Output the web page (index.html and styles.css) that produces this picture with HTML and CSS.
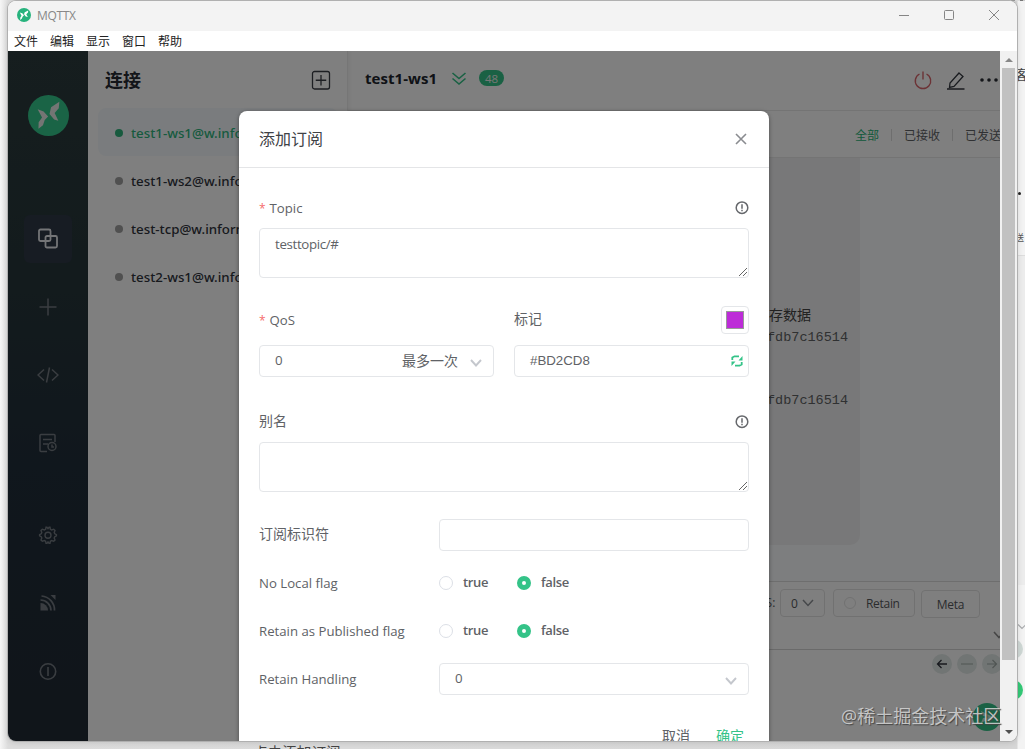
FILE: index.html
```html
<!DOCTYPE html>
<html lang="zh-CN">
<head>
<meta charset="utf-8">
<title>MQTTX</title>
<link rel="stylesheet" href="styles.css">
</head>
<body>
<div class="desktop">
  <div class="behind-top"></div>
  <div class="behind-caption">点击添加订阅</div>
  <div class="behind-char">客</div>
  <div class="behind-dot"></div>
  <div class="behind-small">送</div>
  <div class="behind-panel"></div>
  <svg class="behind-chevron" width="10" height="8" viewBox="0 0 10 8"><path d="M1 1.500l4 4 4-4" fill="none" stroke="#a9abad" stroke-width="1.200"/></svg>
  <div class="behind-nav"></div>
  <div class="behind-fab"></div>

  <div class="window">
    <header class="titlebar">
      <svg class="app-icon" viewBox="0 0 40 40"><circle cx="20" cy="20" r="20" fill="#27b37d"/><path d="M8 13l7 2 5 6-4 4-2 5-5 4 .5-7 3.500-5zM32 7l-.5 6-5 5 4.500 8-6-2-5-6 2-6z" fill="#fff"/></svg>
      <span class="app-name">MQTTX</span>
      <svg class="window-controls" width="106" height="16" viewBox="0 0 106 16" fill="none" stroke="#858585" stroke-width="1"><path d="M1 8.500h10M91 3l10 10M101 3L91 13"/><rect x="46.500" y="3.500" width="9" height="9" rx="1"/></svg>
    </header>
    <nav class="menubar"><span>文件</span><span>编辑</span><span>显示</span><span>窗口</span><span>帮助</span></nav>

    <div class="viewport">
      <div class="app">
        <aside class="sidebar">
          <svg class="logo" viewBox="0 0 40 40"><circle cx="20" cy="20" r="20" fill="#35c88c"/><path d="M9.400 14l5.800 2 4.400 5-3.300 3.500-1.700 5-4.400 3.500.2-6.500 3.300-4.500zM30.600 6.500L30 13l-4 4.600 3.600 7.400-4.100-1-4.500-5.500 1.500-6.500z" fill="#e8ebe9"/></svg>
          <div class="nav-group">
            <div class="nav-item active"><svg width="22" height="22" viewBox="0 0 22 22" fill="none" stroke="#e8eaee" stroke-width="1.800"><rect x="2" y="1.500" width="11.500" height="11.500" rx="1.500"/><rect x="8.500" y="8" width="11.500" height="11.500" rx="1.500"/></svg></div>
            <div class="nav-item"><svg width="22" height="22" viewBox="0 0 22 22" fill="none" stroke="#747b82" stroke-width="1.500"><path d="M11 2.500v17M2.500 11h17"/></svg></div>
            <div class="nav-item"><svg width="22" height="22" viewBox="0 0 22 22" fill="none" stroke="#747b82" stroke-width="1.500"><path d="M7 5.500L1 11l6 5.500M15 5.500l6 5.500-6 5.500M12.500 3.500l-3 15"/></svg></div>
            <div class="nav-item"><svg width="22" height="22" viewBox="0 0 22 22" fill="none" stroke="#747b82" stroke-width="1.500"><path d="M18 10V3.500a1 1 0 0 0-1-1H4a1 1 0 0 0-1 1v15a1 1 0 0 0 1 1h6M6 7.500h9M6 12h5"/><circle cx="15" cy="14.500" r="4"/><path d="M15 12.500v2.500h2"/></svg></div>
          </div>
          <div class="nav-group bottom">
            <div class="nav-item"><svg width="20" height="20" viewBox="0 0 20 20" fill="none" stroke="#747b82" stroke-width="1.400"><path d="M7.600 4.300L8 2.200h.9L10 3.600l1.100-1.400h.9l.4 2.100 1.300.7 2-.8 1.300 1.300-.8 2 .6 1.300 1.600.9v1.100l-1.600.9-.6 1.300.8 2-1.300 1.300-2-.8-1.300.7-.4 2H11l-1-1.300-1 1.300H8l-.4-2-1.300-.7-2 .8L3 15l.8-2-.6-1.300-1.600-.9V9.700l1.600-.9.600-1.300-.8-2 1.300-1.300 2 .8z"/><circle cx="10" cy="10.300" r="3"/></svg></div>
            <div class="nav-item"><svg width="20" height="20" viewBox="0 0 20 20" fill="none" stroke="#747b82" stroke-width="1.700"><path d="M2.500 17.500V10a7.500 7.500 0 0 1 7.500 7.500z" fill="#747b82" stroke="none"/><path d="M2.500 7a10.500 10.500 0 0 1 10.500 10.500M3.500 3a14 14 0 0 1 13 14.500"/><path d="M12.500 2h5v5z" fill="#747b82" stroke="none"/></svg></div>
            <div class="nav-item"><svg width="20" height="20" viewBox="0 0 20 20" fill="none" stroke="#747b82" stroke-width="1.600"><circle cx="10" cy="10.500" r="7.700"/><path d="M10 6v9"/></svg></div>
          </div>
        </aside>

        <section class="connections">
          <div class="connections-head"><h1>连接</h1>
            <svg width="20" height="20" viewBox="0 0 20 20" fill="none" stroke="#3a3e46" stroke-width="1.300"><rect x="1.500" y="1.500" width="17" height="17.500" rx="2"/><path d="M10 5v10.500M4.750 10.250h10.500"/></svg>
          </div>
          <div class="connection online"><i></i><span>test1-ws1@w.info</span></div>
          <div class="connection"><i></i><span>test1-ws2@w.info</span></div>
          <div class="connection"><i></i><span>test-tcp@w.inform</span></div>
          <div class="connection"><i></i><span>test2-ws1@w.info</span></div>
        </section>

        <main class="main">
          <div class="topbar">
            <span class="conn-title">test1-ws1</span>
            <svg class="expand" width="16" height="16" viewBox="0 0 16 16" fill="none" stroke="#34c388" stroke-width="1.600"><path d="M1.500 2L8 7.500 14.500 2M1.500 7.500L8 13l6.500-5.500"/></svg>
            <span class="badge">48</span>
            <div class="tools">
              <svg width="20" height="20" viewBox="0 0 20 20" fill="none" stroke="#d8666c" stroke-width="1.400"><path d="M6.500 3a7.700 7.700 0 1 0 7 0M10 .5v8"/></svg>
              <svg width="20" height="20" viewBox="0 0 20 20" fill="none" stroke="#343940" stroke-width="1.300"><path d="M13 2l4 3.500-9 10-4.500 1 .5-4.500zM1 18h17.500"/></svg>
              <svg width="20" height="20" viewBox="0 0 20 20" fill="#282c34"><circle cx="3" cy="9" r="1.800"/><circle cx="10" cy="9" r="1.800"/><circle cx="17" cy="9" r="1.800"/></svg>
            </div>
          </div>
          <div class="filters"><span class="selected">全部</span><b></b><span>已接收</span><b></b><span>已发送</span></div>
          <div class="messages">
            <div class="bubble">
              <p class="hint">存数据</p>
              <p class="mono">fdb7c16514</p>
              <p class="mono second">fdb7c16514</p>
            </div>
          </div>
          <div class="composer">
            <span class="qos-label">QoS:</span>
            <div class="box qos"><span>0</span><svg width="12" height="8" viewBox="0 0 12 8" fill="none" stroke="#8d9196" stroke-width="1.500"><path d="M1 1l5 5.500L11 1"/></svg></div>
            <div class="box retain"><i></i><span>Retain</span></div>
            <div class="box meta">Meta</div>
            <svg class="collapse" width="12" height="8" viewBox="0 0 12 8" fill="none" stroke="#8c8c8c" stroke-width="1.600"><path d="M1 1l5 5.500L11 1"/></svg>
          </div>
          <div class="payload">
            <div class="history">
              <span><svg width="12" height="12" viewBox="0 0 12 12" fill="none" stroke="#30343c" stroke-width="1.300"><path d="M11 6H2M5.500 2L1.500 6l4 4"/></svg></span>
              <span><svg width="12" height="12" viewBox="0 0 12 12" fill="none" stroke="#aab4b1" stroke-width="1.200"><path d="M0 6h12"/></svg></span>
              <span><svg width="12" height="12" viewBox="0 0 12 12" fill="none" stroke="#a0aaa7" stroke-width="1.200"><path d="M1 6h9M6.500 2l4 4-4 4"/></svg></span>
            </div>
            <div class="send"><svg width="14" height="14" viewBox="0 0 14 14"><path d="M1 1l12 6-12 6 2-5 6-1-6-1z" fill="#bfe8d6"/></svg></div>
          </div>
        </main>

        <div class="overlay"></div>
        <div class="dialog">
          <div class="dialog-head"><h2>添加订阅</h2><svg width="12" height="12" viewBox="0 0 12 12" fill="none" stroke="#8a8c90" stroke-width="1.600"><path d="M1 1l10 10M11 1L1 11"/></svg></div>
          <div class="dialog-body">
            <div class="label-row"><label><em>*</em>Topic</label><svg width="14" height="14" viewBox="0 0 14 14" fill="none" stroke="#66686c" stroke-width="1.500"><circle cx="7" cy="6.700" r="5.800"/><path d="M7 3.200v4.600M7 8.800v1.500"/></svg></div>
            <div class="field area"><span>testtopic/#</span><svg class="grip" width="10" height="10" viewBox="0 0 10 10" stroke="#666" fill="none"><path d="M1 9l8-8M5 9l4-4"/></svg></div>
            <div class="pair">
              <div>
                <div class="label-row"><label><em>*</em>QoS</label></div>
                <div class="field select"><span class="num">0</span><span class="desc">最多一次</span><svg width="12" height="8" viewBox="0 0 12 8" fill="none" stroke="#c4c7cd" stroke-width="1.900"><path d="M1 1l5 5.500L11 1"/></svg></div>
              </div>
              <div>
                <div class="label-row"><label class="cjk">标记</label><div class="swatch"><i></i></div></div>
                <div class="field color"><span class="hex">#BD2CD8</span><svg width="12" height="12" viewBox="0 0 12 12" fill="none" stroke="#34c388" stroke-width="1.800"><path d="M1.300 5V2.500L3.500 1.300H8M10.700 7v2.500L8.500 10.700H4"/><path d="M11.500 1v4.500h-4zM.5 11V6.500h4z" fill="#34c388" stroke="none"/></svg></div>
              </div>
            </div>
            <div class="label-row alias"><label class="cjk">别名</label><svg width="14" height="14" viewBox="0 0 14 14" fill="none" stroke="#66686c" stroke-width="1.500"><circle cx="7" cy="6.700" r="5.800"/><path d="M7 3.200v4.600M7 8.800v1.500"/></svg></div>
            <div class="field area"><svg class="grip" width="10" height="10" viewBox="0 0 10 10" stroke="#666" fill="none"><path d="M1 9l8-8M5 9l4-4"/></svg></div>
            <div class="line first"><label class="cjk">订阅标识符</label><div class="field"></div></div>
            <div class="line"><label>No Local flag</label><div class="radios"><i></i><span class="true">true</span><i class="on"></i><span>false</span></div></div>
            <div class="line"><label>Retain as Published flag</label><div class="radios"><i></i><span class="true">true</span><i class="on"></i><span>false</span></div></div>
            <div class="line"><label>Retain Handling</label><div class="field select"><span class="num">0</span><svg width="12" height="8" viewBox="0 0 12 8" fill="none" stroke="#c4c7cd" stroke-width="1.900"><path d="M1 1l5 5.500L11 1"/></svg></div></div>
            <div class="actions"><span>取消</span><span class="ok">确定</span></div>
          </div>
        </div>
      </div>
      <div class="scrollbar"><i class="up"></i><div class="thumb"></div><i class="down"></i></div>
    </div>
  </div>
  <div class="watermark">@稀土掘金技术社区</div>
</div>
</body>
</html>
```
FILE: styles.css
```css
* { box-sizing: border-box; }
body { margin: 0; font-family: "Open Sans", "Noto Sans CJK SC", sans-serif; font-size: 13px; color: #606266; }
h1, h2, p { margin: 0; }
i, em { font-style: normal; }
svg { display: block; flex: none; }
.desktop { position: relative; width: 1025px; height: 749px; overflow: hidden; background: linear-gradient(90deg, #f6f6f6 0, #dcdcdc 8px, #d6d6d6 1017px, #f3f3f3 1018px); }
.behind-top { position: absolute; left: 250px; right: 0; top: 0; height: 1px; background: repeating-linear-gradient(90deg, #777 0 3px, #ccc 3px 5px, #999 5px 9px, #ddd 9px 14px); }
.behind-caption { position: absolute; left: 253px; top: 742px; font-size: 14.600px; line-height: 20px; color: #444; white-space: nowrap; }
.behind-char { position: absolute; left: 1015px; top: 64px; font-size: 13px; line-height: 20px; color: #444; }
.behind-dot { position: absolute; left: 1018px; top: 192px; width: 3px; height: 3px; border-radius: 50%; background: #222; }
.behind-small { position: absolute; left: 1015px; top: 230px; font-size: 9px; line-height: 16px; color: #555; }
.behind-panel { position: absolute; left: 1017px; top: 255px; width: 8px; height: 330px; background: #ececec; border-top: 1px solid #ddd; }
.behind-chevron { position: absolute; left: 1017px; top: 623px; }
.behind-nav { position: absolute; left: 1003px; top: 639px; width: 20px; height: 20px; border-radius: 50%; background: #cfd8d5; }
.behind-fab { position: absolute; left: 1003px; top: 680px; width: 20px; height: 20px; border-radius: 50%; background: #34c977; }

.window { position: absolute; left: 8px; top: 1px; width: 1009px; height: 740px; display: flex; flex-direction: column; border-radius: 8px; overflow: hidden; box-shadow: 0 0 0 1px #b0b0b0, 0 1px 6px rgba(0,0,0,.15); background: #fff; }
.titlebar { height: 30px; flex: none; display: flex; align-items: center; padding: 0 9px 2px 9px; background: #f3f3f3; }
.app-icon { width: 14px; height: 14px; }
.app-name { margin-left: 6px; font-size: 12px; letter-spacing: -.35px; color: #888; }
.window-controls { margin-left: auto; margin-right: 4px; }
.menubar { height: 20px; flex: none; display: flex; gap: 12px; padding: 1px 0 0 6px; background: #fff; font-size: 12px; line-height: 20px; color: #222; }
.viewport { flex: 1; display: flex; min-height: 0; }
.app { position: relative; width: 992px; display: flex; overflow: hidden; background: #fff; }

.sidebar { width: 80px; flex: none; display: flex; flex-direction: column; align-items: center; padding-top: 44px; background: linear-gradient(180deg, #2c3c3e 0, #26363a 35%, #212e3a 60%, #202a34 100%); }
.logo { width: 41px; height: 41px; }
.nav-group { display: flex; flex-direction: column; gap: 20px; margin-top: 79px; }
.nav-group.bottom { margin-top: 44px; }
.nav-item { width: 48px; height: 48px; display: flex; align-items: center; justify-content: center; border-radius: 6px; }
.nav-item.active { background: #2e3846; }

.connections { width: 260px; flex: none; border-right: 1px solid #ececec; box-shadow: 2px 0 4px rgba(0,0,0,.05); }
.connections-head { height: 57px; display: flex; align-items: center; justify-content: space-between; padding: 1px 16px 0 17px; }
.connections-head h1 { font-size: 18px; line-height: 28px; font-weight: 700; color: #262b33; }
.connection { height: 48px; width: 240px; margin-left: 10px; border-radius: 8px; display: flex; align-items: center; padding: 1px 0 0 17px; font-family: "Noto Sans", sans-serif; font-size: 13.300px; font-weight: 500; color: #30343c; white-space: nowrap; }
.connection i { width: 8px; height: 8px; border-radius: 50%; background: #a0a0a0; margin-right: 8px; flex: none; }
.connection.online { color: #2eb57d; background: #f5f9fc; }
.connection.online i { background: #2eb57d; }

.main { width: 652px; display: flex; flex-direction: column; }
.topbar { height: 60px; flex: none; display: flex; align-items: center; padding: 0 1px 4px 17px; border-bottom: 1px solid #e8e8e8; }
.conn-title { width: 72px; margin-top: -2px; font-size: 15px; font-weight: 700; letter-spacing: .05px; color: #20242c; white-space: nowrap; }
.expand { margin-left: 14px; }
.badge { margin-left: 12px; margin-top: -1px; width: 25px; height: 16px; border-radius: 8px; background: #34c388; color: #eee; font-size: 11.500px; line-height: 17px; text-align: center; }
.tools { margin-left: auto; margin-top: 4px; display: flex; gap: 13px; }
.filters { height: 47px; flex: none; display: flex; align-items: center; padding-left: 507px; padding-top: 1px; border-bottom: 1px solid #e8e8e8; font-size: 12px; white-space: nowrap; overflow: hidden; color: #606266; }
.filters span { flex: none; }
.filters .selected { color: #1fb477; }
.filters b { width: 1px; height: 12px; flex: none; margin: 0 12px; background: #ddd; }
.messages { height: 423px; flex: none; background: #fafcfe; }
.bubble { width: 512px; height: 387px; padding: 145px 0 0 421px; border-radius: 0 0 10px 0; background: #f1f1f2; color: #3c3c3e; white-space: nowrap; }
.hint { font-size: 14px; line-height: 24px; color: #444; }
.mono { font: 13.500px/20px "Liberation Mono", monospace; margin-left: -2px; padding-top: 1px; color: #606264; }
.mono.second { margin-top: 42px; }
.composer { position: relative; height: 69px; flex: none; display: flex; align-items: flex-start; padding: 7px 0 0 401px; border-top: 1px solid #ddd; border-bottom: 1px solid #d4d4d4; font-size: 12px; color: #56585c; }
.qos-label { width: 31px; line-height: 28px; text-align: right; padding-right: 5px; }
.box { height: 28px; border: 1px solid #e2e2e2; border-radius: 4px; display: flex; align-items: center; }
.qos { width: 45px; justify-content: space-between; padding: 0 10px; }
.retain { width: 82px; margin-left: 8px; padding-left: 10px; letter-spacing: -.3px; }
.retain i { width: 12px; height: 12px; border: 1px solid #e2e2e2; border-radius: 50%; margin-right: 10px; }
.meta { width: 59px; margin-left: 6px; margin-top: 1px; justify-content: center; letter-spacing: -.3px; }
.collapse { position: absolute; left: 645px; top: 49px; }
.payload { position: relative; flex: 1; }
.history { display: flex; gap: 5px; padding: 4px 0 0 584px; }
.history span { width: 20px; height: 20px; flex: none; border-radius: 50%; background: #e3eae8; display: flex; align-items: center; justify-content: center; }
.send { position: absolute; left: 625px; top: 53px; width: 28px; height: 28px; border-radius: 50%; background: #34c388; display: flex; align-items: center; justify-content: center; }

.overlay { position: absolute; inset: 0; background: rgba(0,0,0,.5); }
.dialog { position: absolute; left: 231px; top: 60px; width: 530px; height: 660px; border-radius: 8px; background: #fff; box-shadow: 0 1px 4px rgba(0,0,0,.4); font-size: 13.300px; }
.dialog-head { height: 57px; display: flex; align-items: center; justify-content: space-between; padding: 0 22px 0 20px; border-bottom: 1px solid #e4e5e7; }
.dialog-head h2 { font-size: 16px; font-weight: 400; line-height: 24px; color: #404246; }
.dialog-body { padding: 20px; }
.label-row { height: 40px; display: flex; align-items: center; justify-content: space-between; }
.dialog em { color: #f56c6c; font-size: 12px; margin-right: 4px; }
.dialog label { font-size: 13.200px; line-height: 18px; white-space: nowrap; }
.dialog label.cjk { font-size: 14px; padding-bottom: 2px; }
.field { position: relative; height: 32px; border: 1px solid #e4e6e9; border-radius: 4px; background: #fff; padding: 0 15px; display: flex; align-items: center; }
.area { height: 50px; align-items: flex-start; padding-top: 6px; letter-spacing: -.35px; }
.grip { position: absolute; right: 0; bottom: 0; }
.pair { display: grid; grid-template-columns: 235px 235px; gap: 20px; margin-top: 22px; }
.pair .field { margin-top: 5px; }
.select { padding-right: 11px; }
.select svg { margin-left: auto; position: relative; top: 2px; }
.num { padding-bottom: 2px; }
.desc { margin-left: auto; font-size: 14px; padding-bottom: 3px; }
.select .desc + svg { margin-left: 12px; }
.field.color { justify-content: space-between; padding-right: 5px; }
.hex { font-family: "Liberation Sans", sans-serif; font-size: 13.300px; padding-bottom: 2px; }
.swatch { width: 28px; height: 28px; border: 1px solid #e4e6e9; border-radius: 4px; padding: 4px; }
.swatch i { display: block; width: 18px; height: 18px; background: #bd2cd8; border: 1px solid #999; }
.alias { margin-top: 25px; }
.line { height: 48px; display: flex; align-items: center; }
.line label { width: 180px; flex: none; padding-bottom: 1px; }
.line .field { flex: 1; }
.line.first { margin-top: 19px; }
.radios { display: flex; align-items: center; font-weight: 600; font-size: 13px; letter-spacing: -.35px; }
.radios span { padding-bottom: 2px; }
.radios i { width: 14px; height: 14px; border: 1px solid #dcdfe6; border-radius: 50%; margin-right: 10px; }
.radios i.on { border: 5px solid #34c388; }
.radios .true { width: 54px; }
.actions { display: flex; justify-content: flex-end; gap: 26px; padding: 22px 5px 0 0; font-size: 14px; line-height: 22px; }
.ok { color: #34c388; }

.scrollbar { width: 17px; display: flex; flex-direction: column; align-items: center; background: #f1f1f1; }
.scrollbar i { width: 0; height: 0; border: 4px solid transparent; }
.scrollbar .up { border-bottom-color: #888; border-top: 0; margin: 7px 0 6px; }
.scrollbar .thumb { width: 13px; height: 592px; background: #c1c1c1; }
.scrollbar .down { border-top-color: #505050; border-bottom: 0; margin-top: auto; margin-bottom: 7px; }
.watermark { position: absolute; left: 841px; top: 704px; font-size: 18px; line-height: 24px; color: rgba(215,215,215,.85); text-shadow: 1px 1px 1px #444; white-space: nowrap; }
```
